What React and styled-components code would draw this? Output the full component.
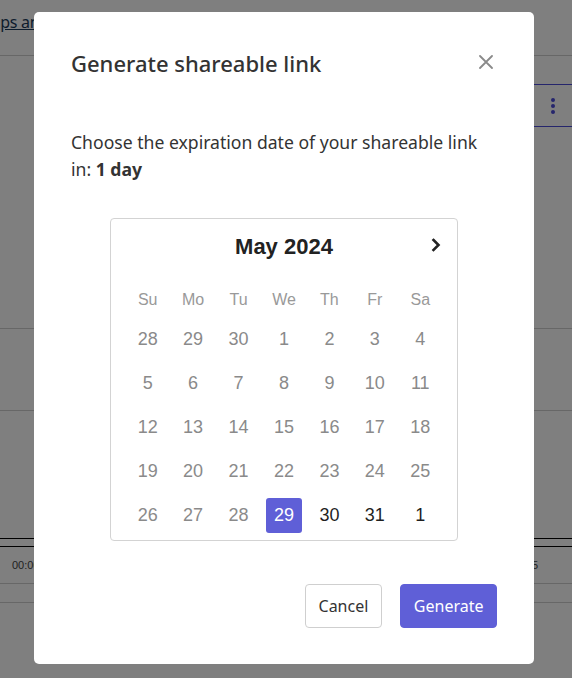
import React from "react";
import styled, { createGlobalStyle } from "styled-components";

const Global = createGlobalStyle`
  html, body { margin: 0; padding: 0; background: #fff; }
  body { font-family: "Noto Sans", "Open Sans", sans-serif; overflow: hidden; }
  * { box-sizing: border-box; }
`;

const Page = styled.div`
  width: 572px;
  height: 678px;
  display: flex;
  flex-direction: column;
  background: #fff;
`;

const TopBar = styled.div`
  height: 56px;
  border-bottom: 1px solid #cfcfcf;
  padding-top: 11px;
  overflow: hidden;
`;

const BgLink = styled.a`
  display: inline-block;
  margin-left: -36px;
  font-size: 16px;
  letter-spacing: -0.3px;
  color: #1a3a5a;
  text-decoration: underline;
  white-space: nowrap;
`;

const SectionA = styled.div`
  height: 273px;
  border-bottom: 1px solid #cfcfcf;
  padding-top: 28px;
  display: flex;
  justify-content: flex-end;
`;

const ToolRow = styled.div`
  width: 300px;
  height: 43px;
  border-top: 1px solid #4a4ad8;
  border-bottom: 1px solid #4a4ad8;
  display: flex;
  align-items: center;
  justify-content: flex-end;
  padding-right: 17px;
`;

const Kebab = styled.div`
  display: flex;
  flex-direction: column;
  gap: 2px;
  & > span {
    width: 4px;
    height: 4px;
    border-radius: 50%;
    background: #4a4ad8;
  }
`;

const SectionB = styled.div`
  height: 82px;
  border-bottom: 1px solid #cfcfcf;
`;

const SectionC = styled.div`
  height: 127px;
`;

const Timeline = styled.div`
  border-top: 1px solid #000;
  padding-top: 7px;
`;

const TimelineInner = styled.div`
  border-top: 1px solid #000;
  height: 38px;
  display: flex;
  justify-content: space-between;
  align-items: center;
  padding: 0 34px 0 12px;
  font-family: "Liberation Sans", Arial, sans-serif;
  font-size: 11px;
  color: #444;
  border-bottom: 1px solid #cfcfcf;
`;

const TimelineFoot = styled.div`
  height: 19px;
  border-bottom: 1px solid #cfcfcf;
`;

const Overlay = styled.div`
  position: fixed;
  inset: 0;
  background: rgba(0, 0, 0, 0.5);
  padding: 12px 0 0 34px;
`;

const Modal = styled.div`
  width: 500px;
  height: 652px;
  background: #fff;
  border-radius: 5px;
  padding: 36px 37px;
  display: flex;
  flex-direction: column;
  color: #333;
`;

const Header = styled.div`
  height: 30px;
  display: flex;
  align-items: center;
  justify-content: space-between;
`;

const Title = styled.h2`
  margin: 0;
  font-size: 22px;
  font-weight: 500;
  color: #333;
`;

const CloseBtn = styled.button`
  width: 22px;
  height: 22px;
  border: none;
  background: none;
  padding: 0;
  display: flex;
  align-items: center;
  justify-content: center;
  cursor: pointer;
  margin-top: -2px;
`;

const Text = styled.p`
  margin: 51px 0 0;
  font-size: 17.6px;
  line-height: 27px;
  color: #333;
  b { font-weight: 700; }
`;

const Calendar = styled.div`
  align-self: center;
  margin-top: 35px;
  width: 348px;
  border: 1px solid #d3d3d3;
  border-radius: 4px;
  padding: 13px 14px 3px;
  font-family: "Liberation Sans", Arial, sans-serif;
`;

const CalHeader = styled.div`
  height: 30px;
  display: grid;
  grid-template-columns: 14px 1fr 14px;
  align-items: center;
  margin-bottom: 21px;
`;

const Month = styled.div`
  grid-column: 2;
  text-align: center;
  font-size: 22px;
  font-weight: 700;
  color: #222;
`;

const NavBtn = styled.button`
  grid-column: 3;
  border: none;
  background: none;
  padding: 0;
  display: flex;
  align-items: center;
  justify-content: center;
  margin-top: -4px;
`;

const Grid = styled.div`
  display: grid;
  grid-template-columns: repeat(7, 1fr);
`;

const WeekDay = styled.div`
  height: 34px;
  display: flex;
  align-items: center;
  justify-content: center;
  font-size: 16px;
  color: #999;
`;

const Day = styled.div`
  height: 44px;
  display: flex;
  align-items: center;
  justify-content: center;
  font-size: 18px;
  & > span {
    width: 36px;
    height: 35px;
    display: flex;
    align-items: center;
    justify-content: center;
    border-radius: 3px;
    color: ${(p) => (p.$selected ? "#fff" : p.$past ? "#8a8a8a" : "#1f1f1f")};
    background: ${(p) => (p.$selected ? "#5f5fd7" : "transparent")};
  }
`;

const Footer = styled.div`
  margin-top: auto;
  display: flex;
  justify-content: flex-end;
  gap: 18px;
`;

const Button = styled.button`
  height: 44px;
  padding: 0 ${(p) => (p.$primary ? "12.5px" : "13px")};
  border-radius: 4px;
  font-family: "Noto Sans", "Open Sans", sans-serif;
  font-size: 16px;
  border: 1px solid ${(p) => (p.$primary ? "#5f5fd7" : "#cfcfcf")};
  background: ${(p) => (p.$primary ? "#5f5fd7" : "#fff")};
  color: ${(p) => (p.$primary ? "#fff" : "#333")};
  cursor: pointer;
`;

const weekdays = ["Su", "Mo", "Tu", "We", "Th", "Fr", "Sa"];
const days = [
  28, 29, 30, 1, 2, 3, 4,
  5, 6, 7, 8, 9, 10, 11,
  12, 13, 14, 15, 16, 17, 18,
  19, 20, 21, 22, 23, 24, 25,
  26, 27, 28, 29, 30, 31, 1,
];
const selectedIndex = 31;

export default function App() {
  return (
    <>
      <Global />
      <Page>
        <TopBar>
          <BgLink href="#">Groups and sharing</BgLink>
        </TopBar>
        <SectionA>
          <ToolRow>
            <Kebab>
              <span />
              <span />
              <span />
            </Kebab>
          </ToolRow>
        </SectionA>
        <SectionB />
        <SectionC />
        <Timeline>
          <TimelineInner>
            <span>00:00</span>
            <span>00:05</span>
          </TimelineInner>
          <TimelineFoot />
        </Timeline>
      </Page>
      <Overlay>
        <Modal role="dialog">
          <Header>
            <Title>Generate shareable link</Title>
            <CloseBtn aria-label="Close">
              <svg width="14" height="14" viewBox="0 0 14 14">
                <path d="M1 1L13 13M13 1L1 13" stroke="#8a8a8a" strokeWidth="1.8" strokeLinecap="round" />
              </svg>
            </CloseBtn>
          </Header>
          <Text>
            Choose the expiration date of your shareable link in: <b>1 day</b>
          </Text>
          <Calendar>
            <CalHeader>
              <Month>May 2024</Month>
              <NavBtn aria-label="Next month">
                <svg width="10" height="14" viewBox="0 0 10 14">
                  <path d="M2.5 2L7.5 7L2.5 12" stroke="#222" strokeWidth="2.6" fill="none" strokeLinecap="square" />
                </svg>
              </NavBtn>
            </CalHeader>
            <Grid>
              {weekdays.map((w) => (
                <WeekDay key={w}>{w}</WeekDay>
              ))}
              {days.map((d, i) => (
                <Day key={i} $past={i < selectedIndex} $selected={i === selectedIndex}>
                  <span>{d}</span>
                </Day>
              ))}
            </Grid>
          </Calendar>
          <Footer>
            <Button>Cancel</Button>
            <Button $primary>Generate</Button>
          </Footer>
        </Modal>
      </Overlay>
    </>
  );
}
